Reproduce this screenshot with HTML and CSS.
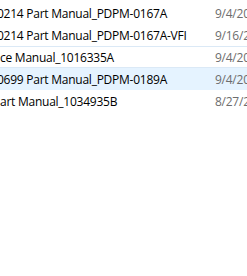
FILE: index.html
```html
<!DOCTYPE html>
<html>
<head>
<meta charset="utf-8">
<link rel="stylesheet" href="styles.css">
</head>
<body>
<div class="list">
  <div class="row"><span class="name">0214 Part Manual_PDPM-0167A</span><span class="date">9/4/2019 10:12 AM</span></div>
  <div class="row"><span class="name">0214 Part Manual_PDPM-0167A-VFI</span><span class="date">9/16/2019 3:40 PM</span></div>
  <div class="row focus"><span class="name lead">ce Manual_1016335A</span><span class="date">9/4/2019 10:12 AM</span></div>
  <div class="row hover"><span class="name">0699 Part Manual_PDPM-0189A</span><span class="date">9/4/2019 10:13 AM</span></div>
  <div class="row"><span class="name lead">art Manual_1034935B</span><span class="date">8/27/2019 9:05 AM</span></div>
</div>
</body>
</html>
```
FILE: styles.css
```css
html, body {
  margin: 0;
  padding: 0;
  background: #ffffff;
  overflow: hidden;
  width: 247px;
  height: 276px;
}
.list {
  display: flex;
  flex-direction: column;
  padding-top: 2px;
  margin-left: -3px;
  width: 400px;
}
.row {
  display: grid;
  grid-template-columns: 218px 1fr;
  height: 20px;
  align-items: center;
  border-top: 1px solid transparent;
  border-bottom: 1px solid transparent;
  font-family: "Open Sans", "Noto Sans", sans-serif;
  font-size: 12px;
  letter-spacing: -0.25px;
  white-space: nowrap;
}
.name {
  color: #000000;
  overflow: hidden;
}
.lead {
  padding-left: 3px;
}
.date {
  color: #6d6d6d;
}
.focus {
  border-top-color: #dbe9f6;
  border-bottom-color: #dbe9f6;
}
.hover {
  background: #e5f3ff;
  border-color: #e5f3ff;
}
```
